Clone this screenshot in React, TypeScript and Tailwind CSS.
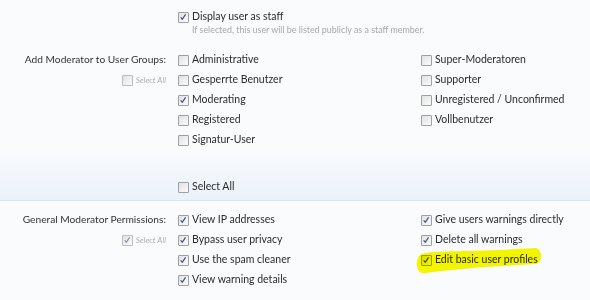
import React from "react";

function Box({ checked, faded }: { checked?: boolean; faded?: boolean }) {
  return (
    <span
      className={`relative inline-block w-[11px] h-[11px] shrink-0 border ${faded ? "border-[#bcbcbc]" : "border-[#a0a0a0]"} bg-gradient-to-br from-[#e2e2e2] to-[#fbfbfb] rounded-[1px]`}
    >
      {checked && (
        <svg viewBox="0 0 11 11" className="absolute left-0 top-0 w-[9px] h-[9px]">
          <path
            d="M2 5.2 L4 7.6 L8 1.6"
            fill="none"
            stroke={faded ? "#8a94b0" : "#3a4f8c"}
            strokeWidth="1.4"
          />
        </svg>
      )}
    </span>
  );
}

function Item({ label, checked }: { label: string; checked?: boolean }) {
  return (
    <div className="h-[20px] flex items-center gap-[3px] text-[10.5px] text-[#2b2b2b] whitespace-nowrap">
      <Box checked={checked} />
      <span>{label}</span>
    </div>
  );
}

function SmallSelectAll({ checked }: { checked?: boolean }) {
  return (
    <div className="h-[20px] flex items-center justify-end gap-[3px] text-[8px] italic text-[#b0b0b0] whitespace-nowrap">
      <Box checked={checked} faded />
      <span>Select All</span>
    </div>
  );
}

export default function App() {
  return (
    <div
      className="relative w-[590px] h-[300px] overflow-hidden bg-[#fafbfd]"
      style={{ fontFamily: 'Lato, "Noto Sans", sans-serif' }}
    >
      {/* Display user as staff */}
      <div className="flex pt-[7px]">
        <div className="w-[166px]" />
        <div className="ml-[12px]">
          <Item label="Display user as staff" checked />
          <div className="pl-[14px] text-[8.9px] text-[#a8a8a8] leading-[12px] -mt-[3px] whitespace-nowrap">
            If selected, this user will be listed publicly as a staff member.
          </div>
        </div>
      </div>

      {/* Add Moderator to User Groups */}
      <div className="flex mt-[14px]">
        <div className="w-[166px] text-right">
          <div className="h-[20px] flex items-center justify-end text-[10.2px] text-[#333] whitespace-nowrap">
            Add Moderator to User Groups:
          </div>
          <SmallSelectAll />
        </div>
        <div className="ml-[12px] grid grid-cols-[243px_1fr]">
          <div>
            <Item label="Administrative" />
            <Item label="Gesperrte Benutzer" />
            <Item label="Moderating" checked />
            <Item label="Registered" />
            <Item label="Signatur-User" />
          </div>
          <div>
            <Item label="Super-Moderatoren" />
            <Item label="Supporter" />
            <Item label="Unregistered / Unconfirmed" />
            <Item label="Vollbenutzer" />
          </div>
        </div>
      </div>

      {/* Band */}
      <div className="flex pt-[27px] pb-[3px] bg-gradient-to-b from-[#fafbfd] to-[#e9f1f9] border-b border-[#d9e4ef]">
        <div className="w-[166px]" />
        <div className="ml-[12px]">
          <Item label="Select All" />
        </div>
      </div>

      {/* General Moderator Permissions */}
      <div className="flex mt-[9px]">
        <div className="w-[166px] text-right">
          <div className="h-[20px] flex items-center justify-end text-[10.2px] text-[#333] whitespace-nowrap">
            General Moderator Permissions:
          </div>
          <SmallSelectAll checked />
        </div>
        <div className="ml-[12px] grid grid-cols-[243px_1fr]">
          <div>
            <Item label="View IP addresses" checked />
            <Item label="Bypass user privacy" checked />
            <Item label="Use the spam cleaner" checked />
            <Item label="View warning details" checked />
          </div>
          <div>
            <Item label="Give users warnings directly" checked />
            <Item label="Delete all warnings" checked />
            <Item label="Edit basic user profiles" checked />
          </div>
        </div>
      </div>

      {/* highlighter stroke */}
      <svg
        className="absolute left-0 top-0 pointer-events-none mix-blend-multiply"
        width="590"
        height="300"
        viewBox="0 0 590 300"
      >
        <path
          d="M419 256 C 421 250 460 252 500 250 L 535 248 C 543 249 543 262 536 264 C 500 266 460 268 426 273 C 416 275 415 262 419 256 Z"
          fill="#f8f800"
        />
      </svg>
    </div>
  );
}
